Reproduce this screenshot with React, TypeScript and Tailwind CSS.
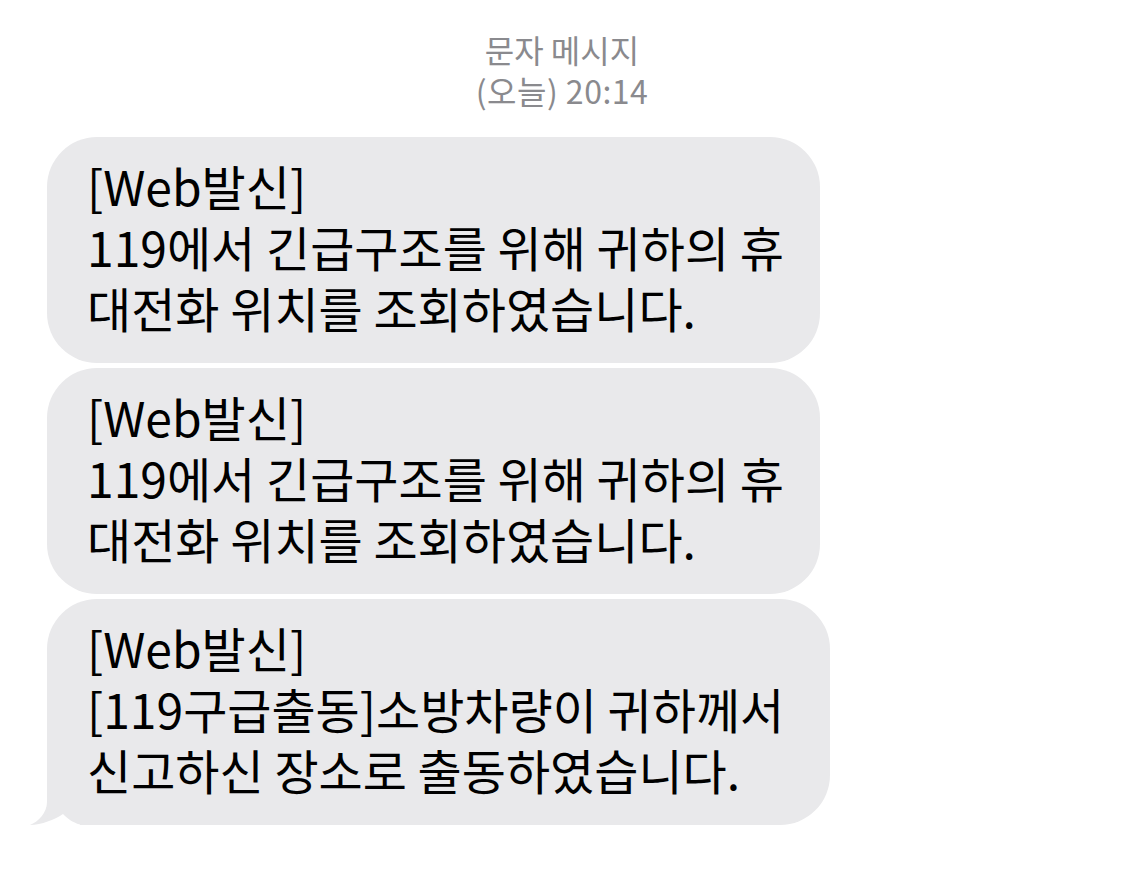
const font = { fontFamily: '"Noto Sans CJK KR", "Noto Sans", sans-serif' };

function Bubble({ lines, width, tail }: { lines: string[]; width: string; tail?: boolean }) {
  return (
    <div
      className={`relative bg-[#e9e9eb] pl-[40px] pt-[18px] pb-[25px] text-[48px] leading-[61px] text-black ${width} ${
        tail ? 'rounded-[50px] rounded-bl-none' : 'rounded-[50px]'
      }`}
    >
      {lines.map((l, i) => (
        <div key={i} className="whitespace-nowrap">
          {l}
        </div>
      ))}
      {tail && (
        <svg className="absolute left-[-17px] bottom-0" width="50" height="30" viewBox="0 0 50 30">
          <path d="M17 0 L17 7 C17 18 8 27 0 30 L18 30 Z" fill="#e9e9eb" />
          <path d="M0 30 C12 29.5 24 25 33 19 C38 24 43 28 52 30 Z" fill="#ffffff" />
        </svg>
      )}
    </div>
  );
}

export default function App() {
  return (
    <div className="min-h-[870px] w-[1124px] bg-white" style={font}>
      <div className="pt-[29px] text-center text-[32px] leading-[41px] text-[#8a8a8e]">
        <div>문자 메시지</div>
        <div className="tracking-[0.5px]">(오늘) 20:14</div>
      </div>
      <div className="mt-[26px] flex flex-col gap-[5px] pl-[47px]">
        <Bubble
          width="w-[773px]"
          lines={['[Web발신]', '119에서 긴급구조를 위해 귀하의 휴', '대전화 위치를 조회하였습니다.']}
        />
        <Bubble
          width="w-[773px]"
          lines={['[Web발신]', '119에서 긴급구조를 위해 귀하의 휴', '대전화 위치를 조회하였습니다.']}
        />
        <Bubble
          width="w-[783px]"
          tail
          lines={['[Web발신]', '[119구급출동]소방차량이 귀하께서', '신고하신 장소로 출동하였습니다.']}
        />
      </div>
    </div>
  );
}
